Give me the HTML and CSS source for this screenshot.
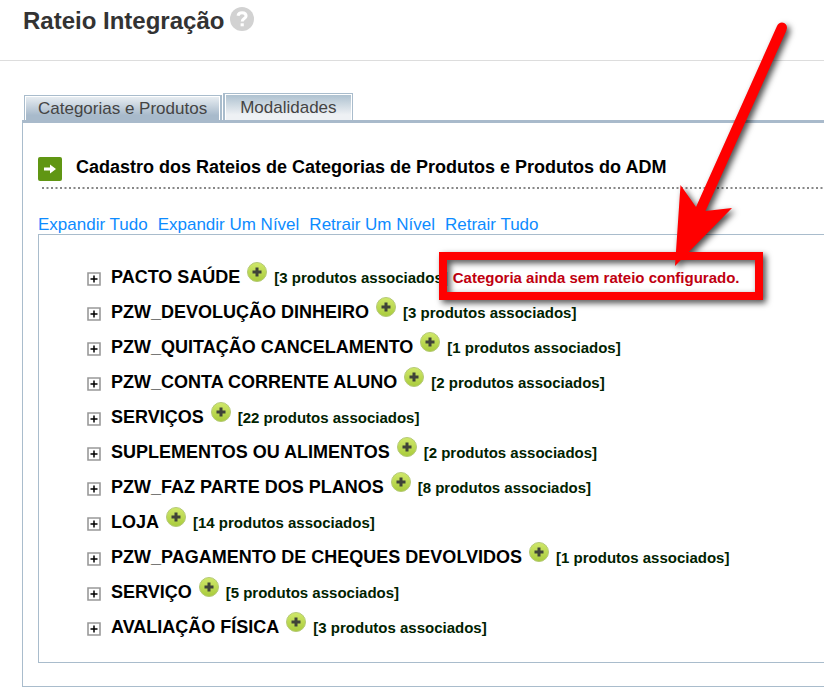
FILE: index.html
```html
<!DOCTYPE html>
<html lang="pt-BR">
<head>
<meta charset="utf-8">
<title>Rateio Integração</title>
<link rel="stylesheet" href="styles.css">
</head>
<body>
<svg class="symbols" aria-hidden="true">
  <defs>
    <linearGradient id="lime" x1="0" y1="0" x2="0" y2="1"><stop offset="0" stop-color="#d0e86a"/><stop offset="1" stop-color="#a9cb3c"/></linearGradient>
  </defs>
  <symbol id="plus" viewBox="0 0 20 20"><circle cx="10" cy="10" r="9.5" fill="url(#lime)" stroke="#b4c976"/><path d="M10 5.500v9M5.500 10h9" stroke="#3f4338" stroke-width="3"/></symbol>
  <symbol id="expand" viewBox="0 0 14 14"><path d="M1 1h12v12H1z" fill="#fff" stroke="#999" stroke-width="1.6"/><path d="M7 3.500v7M3.500 7h7" stroke="#000" stroke-width="1.5"/></symbol>
</svg>
<header class="top">
  <h1>Rateio Integração</h1>
  <button class="icon help" aria-label="Ajuda"><svg viewBox="0 0 24 24"><circle cx="12" cy="12" r="12" fill="#d2d2d2"/><path d="M8 8.7C8.4 6.7 10 5.7 12 5.7c2.300 0 4.100 1.200 4.100 3.200 0 2.600-3.900 2.700-3.900 5.500" fill="none" stroke="#fff" stroke-width="3"/><path d="M10.600 16.300h3.200v3h-3.200z" fill="#fff"/></svg></button>
</header>
<main>
  <nav class="tabs">
    <button class="tab active">Categorias e Produtos</button>
    <button class="tab">Modalidades</button>
  </nav>
  <section class="panel">
    <div class="heading">
      <svg class="go" viewBox="0 0 24 24"><rect width="24" height="24" rx="2" fill="#609613"/><path d="M6 10.500h6V7.500l6 4.500-6 4.500v-3H6z" fill="#fff"/></svg>
      <h2>Cadastro dos Rateios de Categorias de Produtos e Produtos do ADM</h2>
    </div>
    <svg class="dots" height="2" aria-hidden="true"><path d="M0 1H4000" stroke="#888" stroke-width="2" stroke-dasharray="2 2.500"/></svg>
    <div class="links"><a href="#">Expandir Tudo</a><a href="#">Expandir Um Nível</a><a href="#">Retrair Um Nível</a><a href="#">Retrair Tudo</a></div>
    <ul class="tree">
      <li><button class="icon expand" aria-label="Expandir"><svg><use href="#expand"/></svg></button><span class="name">PACTO SAÚDE</span><button class="icon plus" aria-label="Adicionar"><svg><use href="#plus"/></svg></button><span class="count">[3 produtos associados]</span><span class="warning">Categoria ainda sem rateio configurado.</span></li>
      <li><button class="icon expand" aria-label="Expandir"><svg><use href="#expand"/></svg></button><span class="name">PZW_DEVOLUÇÃO DINHEIRO</span><button class="icon plus" aria-label="Adicionar"><svg><use href="#plus"/></svg></button><span class="count">[3 produtos associados]</span></li>
      <li><button class="icon expand" aria-label="Expandir"><svg><use href="#expand"/></svg></button><span class="name">PZW_QUITAÇÃO CANCELAMENTO</span><button class="icon plus" aria-label="Adicionar"><svg><use href="#plus"/></svg></button><span class="count">[1 produtos associados]</span></li>
      <li><button class="icon expand" aria-label="Expandir"><svg><use href="#expand"/></svg></button><span class="name">PZW_CONTA CORRENTE ALUNO</span><button class="icon plus" aria-label="Adicionar"><svg><use href="#plus"/></svg></button><span class="count">[2 produtos associados]</span></li>
      <li><button class="icon expand" aria-label="Expandir"><svg><use href="#expand"/></svg></button><span class="name">SERVIÇOS</span><button class="icon plus" aria-label="Adicionar"><svg><use href="#plus"/></svg></button><span class="count">[22 produtos associados]</span></li>
      <li><button class="icon expand" aria-label="Expandir"><svg><use href="#expand"/></svg></button><span class="name">SUPLEMENTOS OU ALIMENTOS</span><button class="icon plus" aria-label="Adicionar"><svg><use href="#plus"/></svg></button><span class="count">[2 produtos associados]</span></li>
      <li><button class="icon expand" aria-label="Expandir"><svg><use href="#expand"/></svg></button><span class="name">PZW_FAZ PARTE DOS PLANOS</span><button class="icon plus" aria-label="Adicionar"><svg><use href="#plus"/></svg></button><span class="count">[8 produtos associados]</span></li>
      <li><button class="icon expand" aria-label="Expandir"><svg><use href="#expand"/></svg></button><span class="name">LOJA</span><button class="icon plus" aria-label="Adicionar"><svg><use href="#plus"/></svg></button><span class="count">[14 produtos associados]</span></li>
      <li><button class="icon expand" aria-label="Expandir"><svg><use href="#expand"/></svg></button><span class="name">PZW_PAGAMENTO DE CHEQUES DEVOLVIDOS</span><button class="icon plus" aria-label="Adicionar"><svg><use href="#plus"/></svg></button><span class="count">[1 produtos associados]</span></li>
      <li><button class="icon expand" aria-label="Expandir"><svg><use href="#expand"/></svg></button><span class="name">SERVIÇO</span><button class="icon plus" aria-label="Adicionar"><svg><use href="#plus"/></svg></button><span class="count">[5 produtos associados]</span></li>
      <li><button class="icon expand" aria-label="Expandir"><svg><use href="#expand"/></svg></button><span class="name">AVALIAÇÃO FÍSICA</span><button class="icon plus" aria-label="Adicionar"><svg><use href="#plus"/></svg></button><span class="count">[3 produtos associados]</span></li>
    </ul>
  </section>
</main>
<svg class="callout" viewBox="430 10 380 310" width="380" height="310" aria-hidden="true">
  <path d="M443 256h316v40H443z" fill="none" stroke="#f00" stroke-width="8"/>
  <path d="M777 26Q778.500 22.500 782 22.500Q787 23 787 28L786.200 31L705.500 211L732 208L675 266L680.500 185L696 207Z" fill="#f00"/>
</svg>
</body>
</html>
```
FILE: styles.css
```css
* { box-sizing: border-box; }
body {
  margin: 0;
  position: relative;
  overflow-x: hidden;
  background: #fff;
  font-family: "Liberation Sans", Arial, sans-serif;
  font-size: 17px;
}
h1, h2 { margin: 0; }
svg { display: block; }
.symbols { position: absolute; width: 0; height: 0; }
.icon { padding: 0; border: 0; background: none; flex: none; }
.icon svg { width: 100%; height: 100%; }
.top {
  display: flex;
  align-items: flex-start;
  gap: 6px;
  height: 61px;
  padding: 7px 23px;
  border-bottom: 1px solid #ddd;
}
h1 { font-size: 24px; line-height: 28px; color: #333; }
.help { width: 24px; height: 24px; }
main { padding: 32px 0 0 22px; }
.tabs { display: flex; align-items: flex-end; gap: 1px; padding-left: 2px; }
.tab {
  height: 25px;
  padding: 2px 13px 0;
  border: 1px solid #a9bccc;
  border-bottom: 0;
  border-right-width: 2px;
  box-shadow: inset 1px 1px #fff, inset -1px 0 #fff;
  background: linear-gradient(#eaeff3, #a8bacb 80%);
  color: #444;
  font: 17px/22px "Liberation Sans", Arial, sans-serif;
}
.tab:not(.active) {
  height: 27px;
  padding: 1px 15px 0;
  border-left-width: 2px;
  border-right-width: 1px;
  background: linear-gradient(#abbfce, #eef1f4 80%);
}
.panel {
  border: 1px solid #a9bccc;
  border-top: 3px solid #a9bacb;
  border-right: 0;
  padding: 32px 0 23px 15px;
}
.heading { display: flex; gap: 14px; height: 32px; }
.go { width: 24px; height: 24px; margin-top: 2px; flex: none; }
h2 { font-size: 18px; line-height: 24px; white-space: nowrap; }
.dots { width: calc(100% - 4px); margin-left: 4px; }
.links { display: flex; gap: 10px; padding-top: 26px; line-height: 19px; }
.links a { color: #0d8bff; text-decoration: none; white-space: nowrap; }
.tree {
  margin: 0;
  padding: 25px 0 17px 48px;
  border: 1px solid #a9bccc;
  border-right: 0;
  list-style: none;
}
.tree li { display: flex; align-items: center; height: 35px; white-space: nowrap; font-weight: bold; }
.expand { width: 14px; height: 14px; margin: 3px 10px 0 0; }
.name { font-size: 18px; line-height: 24px; padding-bottom: 2px; }
.plus { width: 20px; height: 20px; margin: 0 7px 11px 7px; }
.count, .warning { font-size: 15px; line-height: 18px; padding-top: 1px; }
.count { color: #002200; }
.warning { color: #c00010; margin-left: 5px; }
.callout {
  position: absolute;
  left: 430px;
  top: 10px;
  pointer-events: none;
  filter: drop-shadow(3px 3px 3px rgba(0, 0, 0, .7));
}
```
